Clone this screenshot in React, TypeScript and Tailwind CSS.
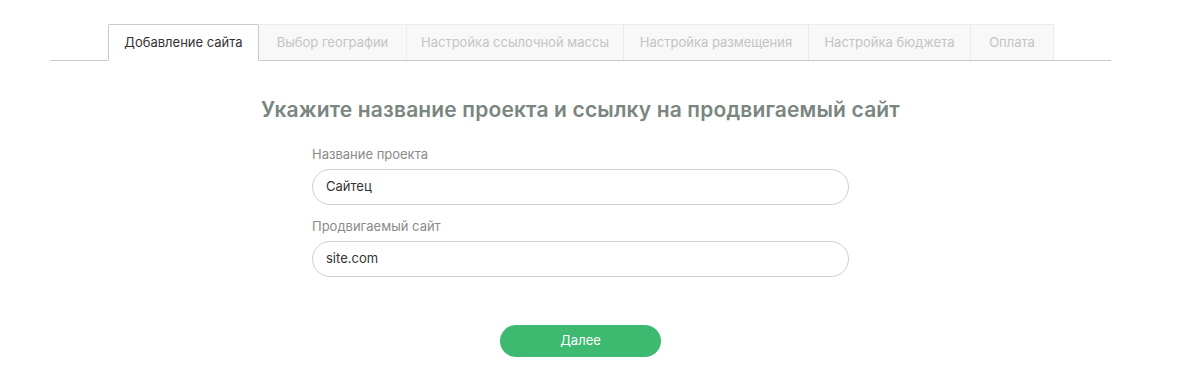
import React from "react"

const tabs = [
  { label: "Добавление сайта", w: "w-[151px]" },
  { label: "Выбор географии", w: "w-[148px]" },
  { label: "Настройка ссылочной массы", w: "w-[217px]" },
  { label: "Настройка размещения", w: "w-[185px]" },
  { label: "Настройка бюджета", w: "w-[162px]" },
  { label: "Оплата", w: "w-[83px]" },
]

function Field({ label, value }: { label: string; value: string }) {
  return (
    <div className="flex flex-col">
      <label className="text-[13px] text-[#8a8a8a] leading-none mb-[8px]">{label}</label>
      <div className="h-[36px] rounded-full border border-[#cfcfcf] flex items-center px-[13px] text-[13px] text-[#333]">
        {value}
      </div>
    </div>
  )
}

export default function App() {
  return (
    <div
      className="w-[1200px] h-[389px] bg-white"
      style={{ fontFamily: "Inter, 'Noto Sans', sans-serif" }}
    >
      <div className="pt-[24px] pl-[50px] w-[1111px]">
        {/* Tabs */}
        <div className="flex border-b border-[#c9c9c9] pl-[58px] h-[37px]">
          {tabs.map((t, i) =>
            i === 0 ? (
              <div
                key={t.label}
                className={`${t.w} h-[37px] -mb-px bg-white border border-[#c9c9c9] border-b-white rounded-t-[2px] flex items-center justify-center text-[13px] text-[#333]`}
              >
                {t.label}
              </div>
            ) : (
              <div
                key={t.label}
                className={`${t.w} h-[36px] bg-[#f8f8f8] border-r border-t border-[#ececec] flex items-center justify-center text-[13px] text-[#c4c4c4]`}
              >
                {t.label}
              </div>
            )
          )}
        </div>

        {/* Form */}
        <div className="flex flex-col items-center">
          <h1 className="mt-[35px] text-[21px] leading-[28px] font-semibold text-[#7b8680] tracking-[0.15px]">
            Укажите название проекта и ссылку на продвигаемый сайт
          </h1>
          <div className="w-[537px] mt-[24px] flex flex-col gap-[15px]">
            <Field label="Название проекта" value="Сайтец" />
            <Field label="Продвигаемый сайт" value="site.com" />
          </div>
          <button className="mt-[48px] w-[161px] h-[32px] rounded-full bg-[#3dba6f] text-white text-[13px]">
            Далее
          </button>
        </div>
      </div>
    </div>
  )
}
